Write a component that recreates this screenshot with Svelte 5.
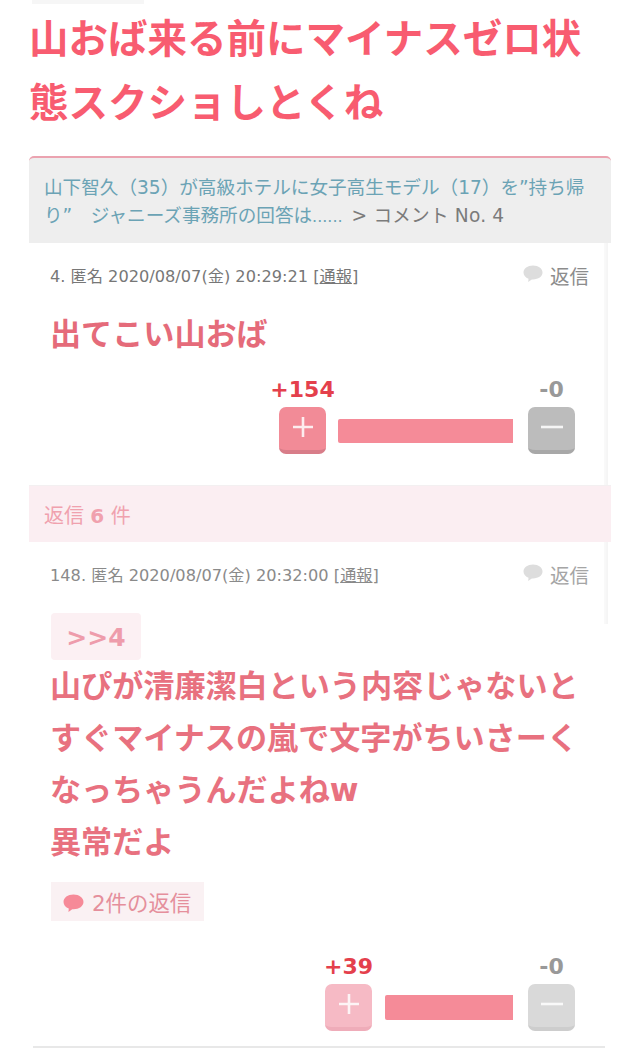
<script>
  const bubble = 'M10 .5C4.6.5.5 3.5.5 7.5c0 2.8 2 5.1 5 6.3L5.2 17l3.6-2.6h1.2c5.4 0 9.5-3 9.5-6.9S15.4.5 10 .5z';
</script>

<main class="page">
  <div class="chip-top"></div>
  <h1 class="title">山おば来る前にマイナスゼロ状態スクショしとくね</h1>

  <section class="card">
    <header class="crumb">
      <a class="link">山下智久（35）が高級ホテルに女子高生モデル（17）を”持ち帰り”　ジャニーズ事務所の回答は<span class="dots">......</span></a><span class="sep">&gt; コメント No. 4</span>
    </header>

    <article class="comment first">
      <div class="meta">
        <span>4. 匿名 2020/08/07(金) 20:29:21 [<u>通報</u>]</span>
        <span class="reply">
          <svg viewBox="0 0 20 18" class="bubble"><path d={bubble} /></svg>返信
        </span>
      </div>
      <p class="body one">出てこい山おば</p>
      <div class="votes">
        <div class="col">
          <span class="count plus">+154</span>
          <div class="btn red"><svg viewBox="0 0 24 24"><path d="M12 2v20M2 12h20" /></svg></div>
        </div>
        <div class="bar wide"></div>
        <div class="col">
          <span class="count minus">-0</span>
          <div class="btn gray"><svg viewBox="0 0 24 24"><path d="M1 12h22" /></svg></div>
        </div>
      </div>
    </article>

    <div class="band">返信 <b>6</b> 件</div>

    <article class="comment second">
      <div class="meta">
        <span>148. 匿名 2020/08/07(金) 20:32:00 [<u>通報</u>]</span>
        <span class="reply">
          <svg viewBox="0 0 20 18" class="bubble"><path d={bubble} /></svg>返信
        </span>
      </div>
      <div class="anchor">&gt;&gt;4</div>
      <p class="body">山ぴが清廉潔白という内容じゃないとすぐマイナスの嵐で文字がちいさーくなっちゃうんだよねw<br />異常だよ</p>
      <div class="replies">
        <svg viewBox="0 0 20 18" class="bubble pink"><path d={bubble} /></svg>2件の返信
      </div>
      <div class="votes light">
        <div class="col">
          <span class="count plus">+39</span>
          <div class="btn red"><svg viewBox="0 0 24 24"><path d="M12 2v20M2 12h20" /></svg></div>
        </div>
        <div class="bar narrow"></div>
        <div class="col">
          <span class="count minus">-0</span>
          <div class="btn gray"><svg viewBox="0 0 24 24"><path d="M1 12h22" /></svg></div>
        </div>
      </div>
    </article>
    <div class="rule"></div>
  </section>
</main>

<style>
  :global(body) {
    margin: 0;
    background: #fff;
  }
  .page {
    width: 640px;
    height: 1050px;
    overflow: hidden;
    font-family: "DejaVu Sans", "Noto Sans CJK JP", sans-serif;
    box-sizing: border-box;
    padding: 0 29px;
  }
  .chip-top {
    width: 112px;
    height: 4px;
    margin-left: 3px;
    background: #f6f6f6;
  }
  .title {
    margin: 3px 0 0;
    font-size: 39.5px;
    line-height: 64px;
    font-weight: 700;
    color: #f85c70;
    font-family: "DejaVu Sans", "Noto Sans CJK JP", sans-serif;
  }
  .card {
    margin-top: 21px;
    width: 582px;
    position: relative;
  }
  .card::after {
    content: "";
    position: absolute;
    top: 22px;
    right: 3px;
    width: 4px;
    height: 446px;
    background: linear-gradient(to right, #fafafa, #f4f4f4);
    pointer-events: none;
  }
  .crumb {
    position: relative;
    z-index: 1;
    box-sizing: border-box;
    height: 87px;
    padding: 16px 15px 0;
    border-top: 2px solid #eba3b0;
    border-radius: 5px 5px 0 0;
    background: #eeeeee;
    font-size: 18.6px;
    line-height: 28px;
    color: #7b7b7b;
  }
  .link {
    color: #6ba3b5;
  }
  .dots {
    font-size: 16px;
  }
  .sep {
    margin-left: 9px;
    letter-spacing: 0.2px;
  }
  .comment {
    position: relative;
    z-index: 2;
    padding: 0 22px;
  }
  .first {
    height: 242px;
  }
  .second {
    height: 505px;
    padding-right: 22px;
  }
  .meta {
    display: flex;
    justify-content: space-between;
    align-items: center;
    padding-top: 18px;
    height: 28px;
    margin-left: -1px;
    font-size: 16.2px;
    color: #777;
  }
  .second .meta {
    padding-top: 18px;
    color: #8a8a8a;
  }
  .reply {
    display: flex;
    align-items: center;
    font-size: 19.5px;
    color: #8c8c8c;
  }
  .second .reply {
    color: #a5a5a5;
  }
  .bubble {
    width: 20px;
    height: 18px;
    margin: -3px 7px 0 0;
    fill: #dddddd;
  }
  .bubble.pink {
    width: 21px;
    height: 19px;
    fill: #f68a98;
    margin: 3px 8px 0 0;
  }
  .body {
    margin: 0 0 0 -1px;
    font-size: 31.1px;
    line-height: 52px;
    font-weight: 700;
    color: #e8717f;
  }
  .one {
    padding-top: 19px;
    color: #e56b7a;
  }
  .votes {
    display: flex;
    justify-content: flex-end;
    align-items: flex-end;
    padding-right: 14px;
    margin-top: 17px;
  }
  .col {
    display: flex;
    flex-direction: column;
    align-items: center;
    width: 47px;
  }
  .count {
    font-size: 22px;
    line-height: 26px;
    font-weight: 700;
    white-space: nowrap;
    margin-bottom: 4px;
  }
  .plus {
    color: #e4404c;
  }
  .minus {
    color: #999;
  }
  .btn {
    box-sizing: border-box;
    width: 47px;
    height: 47px;
    border-radius: 7px;
    display: flex;
    align-items: center;
    justify-content: center;
    padding-bottom: 4px;
  }
  .btn svg {
    width: 24px;
    height: 24px;
    fill: none;
    stroke: #fff;
    stroke-width: 2.6;
    opacity: 0.85;
  }
  .red {
    background: #f28b97;
    border-bottom: 4px solid #d87d89;
  }
  .gray {
    background: #bcbcbc;
    border-bottom: 4px solid #a8a8a8;
  }
  .light .red {
    background: #f6bac5;
    border-bottom-color: #efacb9;
  }
  .light .gray {
    background: #d9d9d9;
    border-bottom-color: #cdcdcd;
  }
  .bar {
    height: 24px;
    margin: 0 15px 11px 12px;
    background: #f58b98;
    border-radius: 2px 0 0 2px;
  }
  .wide {
    width: 175px;
  }
  .narrow {
    width: 128px;
    margin-left: 13px;
    height: 25px;
  }
  .band {
    position: relative;
    z-index: 3;
    box-sizing: border-box;
    height: 57px;
    padding: 0 15px;
    line-height: 60px;
    font-size: 20px;
    color: #f0a1ae;
    background: #fbeef2;
    border-top: 1px solid #f3f0f1;
  }
  .anchor {
    box-sizing: border-box;
    width: 90px;
    height: 47px;
    margin-top: 25px;
    border-radius: 4px;
    background: #fcf0f3;
    color: #ee9cab;
    font-size: 25px;
    font-weight: 700;
    line-height: 50px;
    text-align: center;
  }
  .second .body {
    margin-top: 0;
  }
  .replies {
    display: inline-flex;
    align-items: center;
    box-sizing: border-box;
    width: 153px;
    height: 39px;
    margin-top: 14px;
    padding-left: 12px;
    background: #faf1f3;
    color: #e58f9c;
    font-size: 21.4px;
    white-space: nowrap;
  }
  .second .votes {
    margin-top: 33px;
  }
  .rule {
    position: absolute;
    z-index: 4;
    left: 4px;
    right: 6px;
    top: 890px;
    height: 2px;
    background: #e8e8e8;
  }
</style>
